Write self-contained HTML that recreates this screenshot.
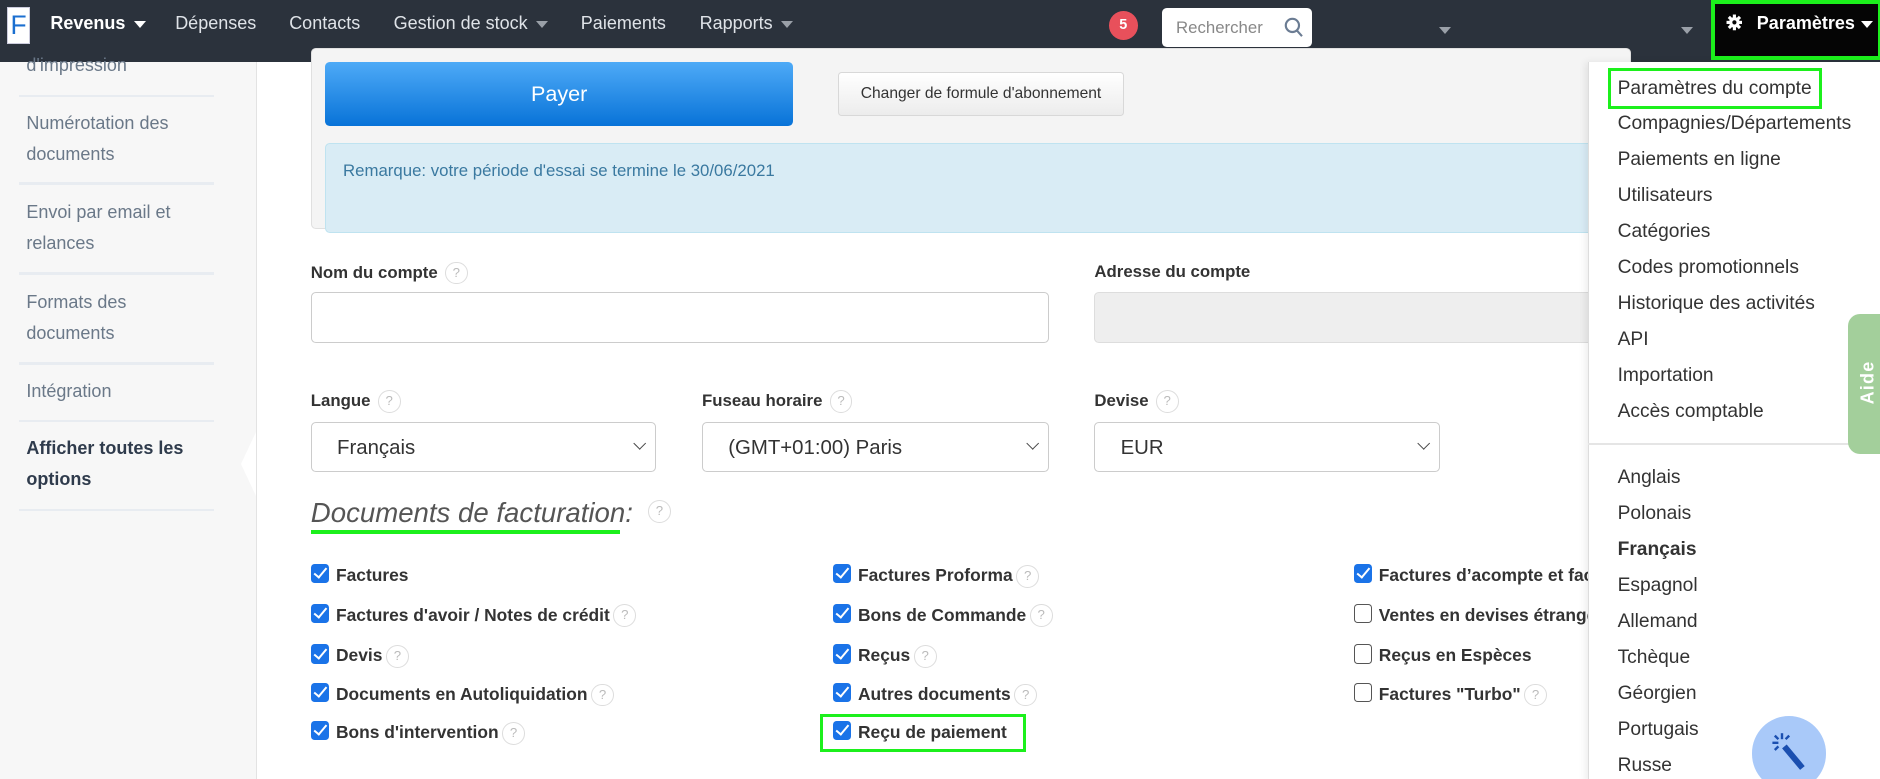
<!DOCTYPE html>
<html><head><meta charset="utf-8"><style>
*{box-sizing:border-box;margin:0;padding:0}
html,body{width:1880px;height:779px;overflow:hidden;background:#fff}
#w{zoom:1.2;width:1567px;height:650px;position:relative;font-family:"Liberation Sans",sans-serif;overflow:hidden}
.a{position:absolute;white-space:nowrap}
.nav{left:0;top:0;width:1567px;height:52px;background:#2b323c}
.ni{top:11px;font-size:15px;color:#dfe3e8}
.car{display:inline-block;width:0;height:0;border-left:5px solid transparent;border-right:5px solid transparent;border-top:6px solid #9aa0a8;margin-left:7px;vertical-align:middle}
.side{left:0;top:52px;width:214px;height:598px;background:#f7f7f7;border-right:1px solid #e3e3e3}
.st{left:22px;font-size:15px;color:#6a7888;line-height:26px}
.sep{left:16px;width:162px;height:2px;background:#e8ecf1}
.lab{font-size:14px;font-weight:bold;color:#333}
.q{display:inline-block;width:19px;height:19px;border:1px solid #ddd;border-radius:50%;font-size:11px;color:#bbb;text-align:center;line-height:17px;font-weight:normal;vertical-align:middle;margin-left:6px}
.inp{border:1px solid #ccc;border-radius:4px;background:#fff;height:43px}
.sel{height:41px;font-size:17px;color:#333;padding:11px 0 0 21px}
.sel:after{content:"";position:absolute;right:9px;top:13px;width:7px;height:7px;border-right:1.5px solid #444;border-bottom:1.5px solid #444;transform:rotate(45deg)}
.cb{font-size:14.5px;font-weight:bold;color:#333}
.cb i{display:inline-block;width:15px;height:16px;border-radius:3px;background:#1a73e8;vertical-align:-2px;margin-right:6px;position:relative}
.cb i:after{content:"";position:absolute;left:5px;top:1px;width:4px;height:9px;border-right:2px solid #fff;border-bottom:2px solid #fff;transform:rotate(40deg)}
.cb i.u{background:#fff;border:1px solid #555}
.cb i.u:after{display:none}
.dd{font-size:16px;color:#333;left:1348px}
</style></head><body><div id="w">
<div class="a nav"></div>
<div class="a" style="left:6px;top:6px;width:19px;height:31px;background:#fff;border:1px solid #ccd;color:#1b6fd0;font-size:22px;text-align:center;line-height:29px">F</div>
<div class="a ni" style="left:42px;color:#fff;font-weight:bold">Revenus<span class="car" style="border-top-color:#fff"></span></div>
<div class="a ni" style="left:146px">Dépenses</div>
<div class="a ni" style="left:241px">Contacts</div>
<div class="a ni" style="left:328px">Gestion de stock<span class="car"></span></div>
<div class="a ni" style="left:484px">Paiements</div>
<div class="a ni" style="left:583px">Rapports<span class="car"></span></div>
<div class="a" style="left:924px;top:9px;width:24px;height:24px;border-radius:50%;background:#e8505b;color:#fff;font-size:12px;font-weight:bold;text-align:center;line-height:24px">5</div>
<div class="a" style="left:968px;top:7px;width:125px;height:32px;background:#fff;border-radius:4px;font-size:14px;color:#888;padding:8px 0 0 12px">Rechercher
<svg style="position:absolute;left:102px;top:7px" width="16" height="18" viewBox="0 0 16 18"><circle cx="7" cy="7" r="5.5" fill="none" stroke="#6b7c93" stroke-width="1.8"/><line x1="11" y1="11.5" x2="15" y2="16" stroke="#6b7c93" stroke-width="1.8"/></svg></div>
<div class="a" style="left:1199px;top:16px"><span class="car" style="margin:0"></span></div>
<div class="a" style="left:1401px;top:16px"><span class="car" style="margin:0"></span></div>
<div class="a" style="left:1426px;top:0;width:142px;height:50px;background:#050505;border:4px solid #1cf01c"></div>
<svg class="a" style="left:1438px;top:12px" width="14" height="14" viewBox="0 0 16 16"><g fill="#fff"><circle cx="8" cy="8" r="5"/><rect x="6.5" y="0.5" width="3" height="15"/><rect x="0.5" y="6.5" width="15" height="3"/><rect x="6.5" y="0.5" width="3" height="15" transform="rotate(45 8 8)"/><rect x="6.5" y="0.5" width="3" height="15" transform="rotate(-45 8 8)"/></g><circle cx="8" cy="8" r="2" fill="#050505"/></svg>
<div class="a ni" style="left:1464px;color:#fff;font-weight:bold">Paramètres<span class="car" style="border-top-color:#fff;margin-left:5px"></span></div>

<div class="a side"></div>
<div class="a st" style="top:42px">d'impression</div>
<div class="a sep" style="top:79px"></div>
<div class="a st" style="top:90px">Numérotation des<br>documents</div>
<div class="a sep" style="top:152px"></div>
<div class="a st" style="top:164px">Envoi par email et<br>relances</div>
<div class="a sep" style="top:227px"></div>
<div class="a st" style="top:239px">Formats des<br>documents</div>
<div class="a sep" style="top:302px"></div>
<div class="a st" style="top:313px">Intégration</div>
<div class="a sep" style="top:350px"></div>
<div class="a st" style="top:361px;color:#2f3b4c;font-weight:bold">Afficher toutes les<br>options</div>
<div class="a sep" style="top:424px"></div>
<div class="a" style="left:201px;top:360px;width:0;height:0;border-top:27px solid transparent;border-bottom:27px solid transparent;border-right:13px solid #fff"></div>

<div class="a" style="left:259px;top:40px;width:1100px;height:151px;background:#f4f4f4;border:1px solid #e0e0e0;border-radius:4px"></div>
<div class="a" style="left:271px;top:52px;width:390px;height:53px;border-radius:4px;background:linear-gradient(#4eaaf7,#0873d8);color:#fff;font-size:18px;text-align:center;line-height:53px">Payer</div>
<div class="a" style="left:698px;top:60px;width:239px;height:37px;border-radius:3px;background:linear-gradient(#fff,#ececec);border:1px solid #d8d8d8;font-size:13px;color:#333;text-align:center;line-height:35px">Changer de formule d'abonnement</div>
<div class="a" style="left:271px;top:119px;width:1100px;height:75px;background:#d9ecf5;border:1px solid #bfe3f0;border-radius:4px;color:#3a79a0;font-size:14px;padding:14px 0 0 14px">Remarque: votre période d'essai se termine le 30/06/2021</div>

<div class="a lab" style="left:259px;top:218px">Nom du compte<span class="q">?</span></div>
<div class="a inp" style="left:259px;top:243px;width:615px"></div>
<div class="a lab" style="left:912px;top:218px">Adresse du compte</div>
<div class="a inp" style="left:912px;top:243px;width:450px;background:#eee;border-color:#ddd"></div>

<div class="a lab" style="left:259px;top:325px">Langue<span class="q">?</span></div>
<div class="a lab" style="left:585px;top:325px">Fuseau horaire<span class="q">?</span></div>
<div class="a lab" style="left:912px;top:325px">Devise<span class="q">?</span></div>
<div class="a inp sel" style="left:259px;top:352px;width:288px">Français</div>
<div class="a inp sel" style="left:585px;top:352px;width:289px">(GMT+01:00) Paris</div>
<div class="a inp sel" style="left:912px;top:352px;width:288px">EUR</div>

<div class="a" style="left:259px;top:414px;font-size:23px;font-style:italic;color:#555">Documents de facturation:</div>
<div class="a" style="left:259px;top:442px;width:258px;height:3px;background:#1cf01c"></div>
<div class="a" style="left:534px;top:417px"><span class="q">?</span></div>

<div class="a cb" style="left:259px;top:470px"><i></i>Factures</div>
<div class="a cb" style="left:259px;top:503px"><i></i>Factures d'avoir / Notes de crédit<span class="q" style="margin-left:3px">?</span></div>
<div class="a cb" style="left:259px;top:537px"><i></i>Devis<span class="q" style="margin-left:3px">?</span></div>
<div class="a cb" style="left:259px;top:569px"><i></i>Documents en Autoliquidation<span class="q" style="margin-left:3px">?</span></div>
<div class="a cb" style="left:259px;top:601px"><i></i>Bons d'intervention<span class="q" style="margin-left:3px">?</span></div>
<div class="a cb" style="left:694px;top:470px"><i></i>Factures Proforma<span class="q" style="margin-left:3px">?</span></div>
<div class="a cb" style="left:694px;top:503px"><i></i>Bons de Commande<span class="q" style="margin-left:3px">?</span></div>
<div class="a cb" style="left:694px;top:537px"><i></i>Reçus<span class="q" style="margin-left:3px">?</span></div>
<div class="a cb" style="left:694px;top:569px"><i></i>Autres documents<span class="q" style="margin-left:3px">?</span></div>
<div class="a cb" style="left:694px;top:601px"><i></i>Reçu de paiement</div>
<div class="a" style="left:683px;top:595px;width:172px;height:32px;border:3px solid #1cf01c"></div>
<div class="a cb" style="left:1128px;top:470px"><i></i>Factures d’acompte et factures</div>
<div class="a cb" style="left:1128px;top:503px"><i class="u"></i>Ventes en devises étrangères</div>
<div class="a cb" style="left:1128px;top:537px"><i class="u"></i>Reçus en Espèces</div>
<div class="a cb" style="left:1128px;top:569px"><i class="u"></i>Factures "Turbo"<span class="q" style="margin-left:3px">?</span></div>

<div class="a" style="left:1323px;top:52px;width:250px;height:600px;background:#fff;border-left:1px solid #ddd;box-shadow:-2px 0 6px rgba(0,0,0,.08)"></div>
<div class="a" style="left:1340px;top:57px;width:178px;height:34px;border:3px solid #1cf01c"></div>
<div class="a dd" style="top:65px">Paramètres du compte</div>
<div class="a dd" style="top:94px">Compagnies/Départements</div>
<div class="a dd" style="top:124px">Paiements en ligne</div>
<div class="a dd" style="top:154px">Utilisateurs</div>
<div class="a dd" style="top:184px">Catégories</div>
<div class="a dd" style="top:214px">Codes promotionnels</div>
<div class="a dd" style="top:244px">Historique des activités</div>
<div class="a dd" style="top:274px">API</div>
<div class="a dd" style="top:304px">Importation</div>
<div class="a dd" style="top:334px">Accès comptable</div>
<div class="a" style="left:1323px;top:369px;width:245px;height:2px;background:#e5e5e5"></div>
<div class="a dd" style="top:389px">Anglais</div>
<div class="a dd" style="top:419px">Polonais</div>
<div class="a dd" style="top:449px;font-weight:bold">Français</div>
<div class="a dd" style="top:479px">Espagnol</div>
<div class="a dd" style="top:509px">Allemand</div>
<div class="a dd" style="top:539px">Tchèque</div>
<div class="a dd" style="top:569px">Géorgien</div>
<div class="a dd" style="top:599px">Portugais</div>
<div class="a dd" style="top:629px">Russe</div>

<div class="a" style="left:1540px;top:262px;width:40px;height:116px;background:#a3cf9b;border-radius:10px 0 0 10px"></div>
<div class="a" style="left:1538px;top:310px;color:#fff;font-weight:bold;font-size:15px;transform:rotate(-90deg);transform-origin:center;letter-spacing:1px">Aide</div>
<div class="a" style="left:1460px;top:597px;width:62px;height:62px;border-radius:50%;background:#a9c9f9"></div>
<svg class="a" style="left:1475px;top:610px" width="34" height="34" viewBox="0 0 34 34"><line x1="12" y1="12" x2="27" y2="30" stroke="#1b4fb0" stroke-width="5"/><g stroke="#1b4fb0" stroke-width="2"><line x1="10" y1="1" x2="10" y2="6"/><line x1="2" y1="9" x2="7" y2="9"/><line x1="4" y1="3" x2="7" y2="6"/><line x1="16" y1="3" x2="13" y2="6"/><line x1="4" y1="15" x2="7" y2="12"/></g></svg>
</div></body></html>
